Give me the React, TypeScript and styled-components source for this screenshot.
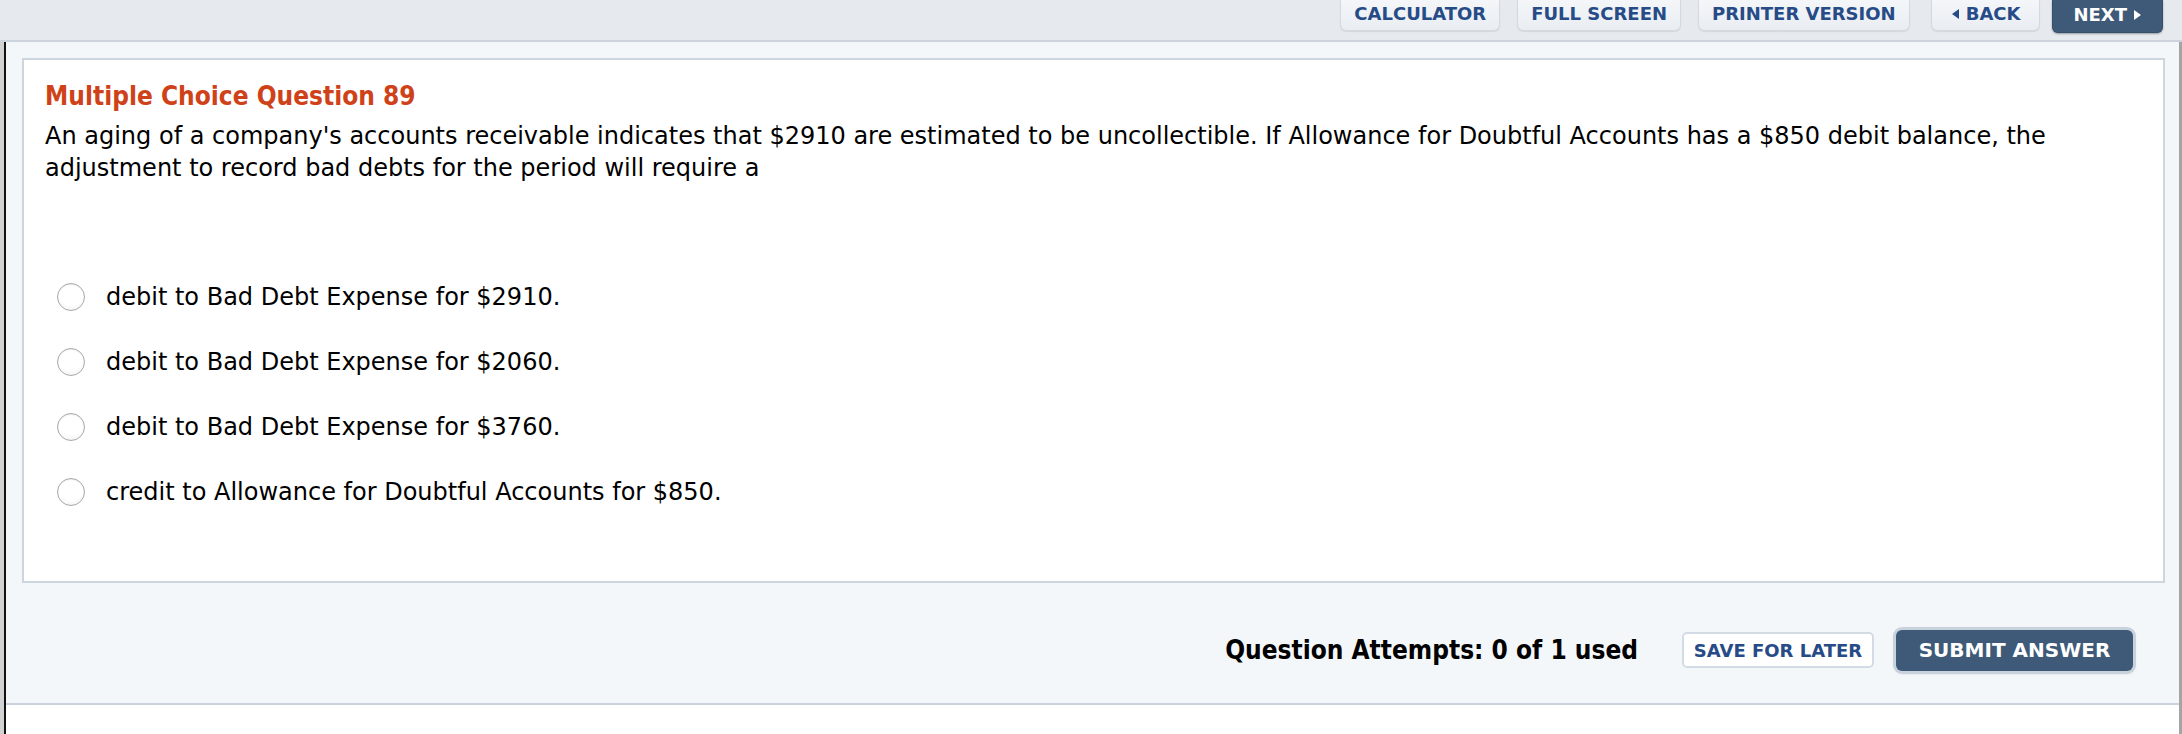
import React from "react";
import styled, { createGlobalStyle } from "styled-components";

const Global = createGlobalStyle`
  html, body { margin: 0; padding: 0; background: #ffffff; }
  body { font-family: "DejaVu Sans", Verdana, sans-serif; }
  * { box-sizing: border-box; }
`;

const Page = styled.div`
  width: 2182px;
  height: 734px;
  display: flex;
  flex-direction: column;
  overflow: hidden;
`;

const TopBar = styled.div`
  height: 42px;
  flex: none;
  background: #e6eaef;
  border-bottom: 2px solid #ccd3dd;
  display: flex;
  justify-content: flex-end;
  align-items: flex-start;
  padding-right: 19px;
`;

const TopButton = styled.button<{ $dark?: boolean; $gap: number; $pad: number }>`
  height: ${(p) => (p.$dark ? 33 : 31)}px;
  margin-left: ${(p) => p.$gap}px;
  padding: 0 ${(p) => p.$pad}px;
  border: 1px solid ${(p) => (p.$dark ? "#35506c" : "#d3d9e1")};
  border-top: none;
  border-radius: 0 0 6px 6px;
  background: ${(p) =>
    p.$dark ? "#3e5a78" : "linear-gradient(#f4f6f9, #e9edf2)"};
  box-shadow: ${(p) =>
    p.$dark ? "0 1px 2px rgba(0,0,0,0.35)" : "0 1px 1px rgba(0,0,0,0.08)"};
  color: ${(p) => (p.$dark ? "#ffffff" : "#264b86")};
  font-family: "DejaVu Sans", Verdana, sans-serif;
  font-weight: bold;
  font-size: 18px;
  line-height: 1;
  display: flex;
  align-items: center;
  justify-content: center;
  gap: 6px;
  padding-bottom: ${(p) => (p.$dark ? 3 : 2)}px;
`;

const Arrow = styled.svg`
  width: 9px;
  height: 12px;
  flex: none;
`;

const Frame = styled.div`
  flex: 1;
  display: flex;
  background: #d2d2d2;
  padding-left: 4px;
`;

const FrameInner = styled.div`
  flex: 1;
  background: #ffffff;
  border-left: 2px solid #111111;
  border-right: 3px solid #a4a4a4;
  box-shadow: 2px 0 0 #ffffff;
  display: flex;
  flex-direction: column;
  width: 2172px;
`;

const Main = styled.div`
  height: 663px;
  flex: none;
  background: #f4f7fa;
  border-bottom: 2px solid #c9d2dd;
  padding: 16px 14px 0 16px;
  display: flex;
  flex-direction: column;
`;

const Card = styled.div`
  height: 525px;
  flex: none;
  background: #ffffff;
  border: 2px solid #cdd5df;
  padding: 20px 21px 0 21px;
`;

const Title = styled.h2`
  margin: 0;
  font-family: "DejaVu Sans Condensed", "DejaVu Sans", sans-serif;
  font-weight: bold;
  font-size: 26px;
  line-height: 32px;
  color: #cf4219;
`;

const Prompt = styled.p`
  margin: 8px 0 0 0;
  font-family: "DejaVu Sans", Verdana, sans-serif;
  font-size: 24px;
  line-height: 32px;
  color: #000000;
`;

const Options = styled.div`
  margin-top: 99px;
  display: flex;
  flex-direction: column;
  gap: 37px;
  padding-left: 12px;
`;

const Option = styled.label`
  display: flex;
  align-items: center;
  gap: 21px;
  height: 28px;
  font-family: "DejaVu Sans", Verdana, sans-serif;
  font-size: 24px;
  color: #000000;
`;

const Radio = styled.span`
  width: 28px;
  height: 28px;
  flex: none;
  border-radius: 50%;
  border: 1px solid #a9a9a9;
  background: radial-gradient(circle at 50% 35%, #ffffff 55%, #ececec 100%);
  box-shadow: inset 0 1px 1px rgba(0, 0, 0, 0.08);
`;

const Footer = styled.div`
  flex: 1;
  display: flex;
  justify-content: flex-end;
  align-items: center;
  padding-right: 32px;
  padding-top: 14px;
`;

const Attempts = styled.span`
  font-family: "DejaVu Sans Condensed", "DejaVu Sans", sans-serif;
  font-weight: bold;
  font-size: 26px;
  color: #000000;
  margin-right: 44px;
`;

const SaveButton = styled.button`
  width: 192px;
  height: 36px;
  border: 2px solid #d3dbe5;
  border-radius: 5px;
  background: #ffffff;
  color: #264b86;
  font-family: "DejaVu Sans", Verdana, sans-serif;
  font-weight: bold;
  font-size: 18px;
  margin-right: 22px;
`;

const SubmitButton = styled.button`
  width: 237px;
  height: 41px;
  border: none;
  border-radius: 6px;
  background: #3e5a78;
  box-shadow: 0 0 0 3px #c8d2dd, 0 1px 4px rgba(0, 0, 0, 0.25);
  color: #ffffff;
  font-family: "DejaVu Sans", Verdana, sans-serif;
  font-weight: bold;
  font-size: 20px;
`;

const options = [
  "debit to Bad Debt Expense for $2910.",
  "debit to Bad Debt Expense for $2060.",
  "debit to Bad Debt Expense for $3760.",
  "credit to Allowance for Doubtful Accounts for $850.",
];

export default function App() {
  return (
    <Page>
      <Global />
      <TopBar>
        <TopButton $gap={0} $pad={13}>CALCULATOR</TopButton>
        <TopButton $gap={17} $pad={13}>FULL SCREEN</TopButton>
        <TopButton $gap={17} $pad={13}>PRINTER VERSION</TopButton>
        <TopButton $gap={21} $pad={19}>
          <Arrow viewBox="0 0 9 12">
            <path d="M8 1 L1 6 L8 11 Z" fill="#264b86" />
          </Arrow>
          BACK
        </TopButton>
        <TopButton $gap={12} $dark $pad={20}>
          NEXT
          <Arrow viewBox="0 0 9 12">
            <path d="M1 1 L8 6 L1 11 Z" fill="#ffffff" />
          </Arrow>
        </TopButton>
      </TopBar>
      <Frame>
        <FrameInner>
          <Main>
            <Card>
              <Title>Multiple Choice Question 89</Title>
              <Prompt>
                An aging of a company's accounts receivable indicates that $2910
                are estimated to be uncollectible. If Allowance for Doubtful
                Accounts has a $850 debit balance, the adjustment to record bad
                debts for the period will require a
              </Prompt>
              <Options>
                {options.map((o) => (
                  <Option key={o}>
                    <Radio />
                    {o}
                  </Option>
                ))}
              </Options>
            </Card>
            <Footer>
              <Attempts>Question Attempts: 0 of 1 used</Attempts>
              <SaveButton>SAVE FOR LATER</SaveButton>
              <SubmitButton>SUBMIT ANSWER</SubmitButton>
            </Footer>
          </Main>
        </FrameInner>
      </Frame>
    </Page>
  );
}
